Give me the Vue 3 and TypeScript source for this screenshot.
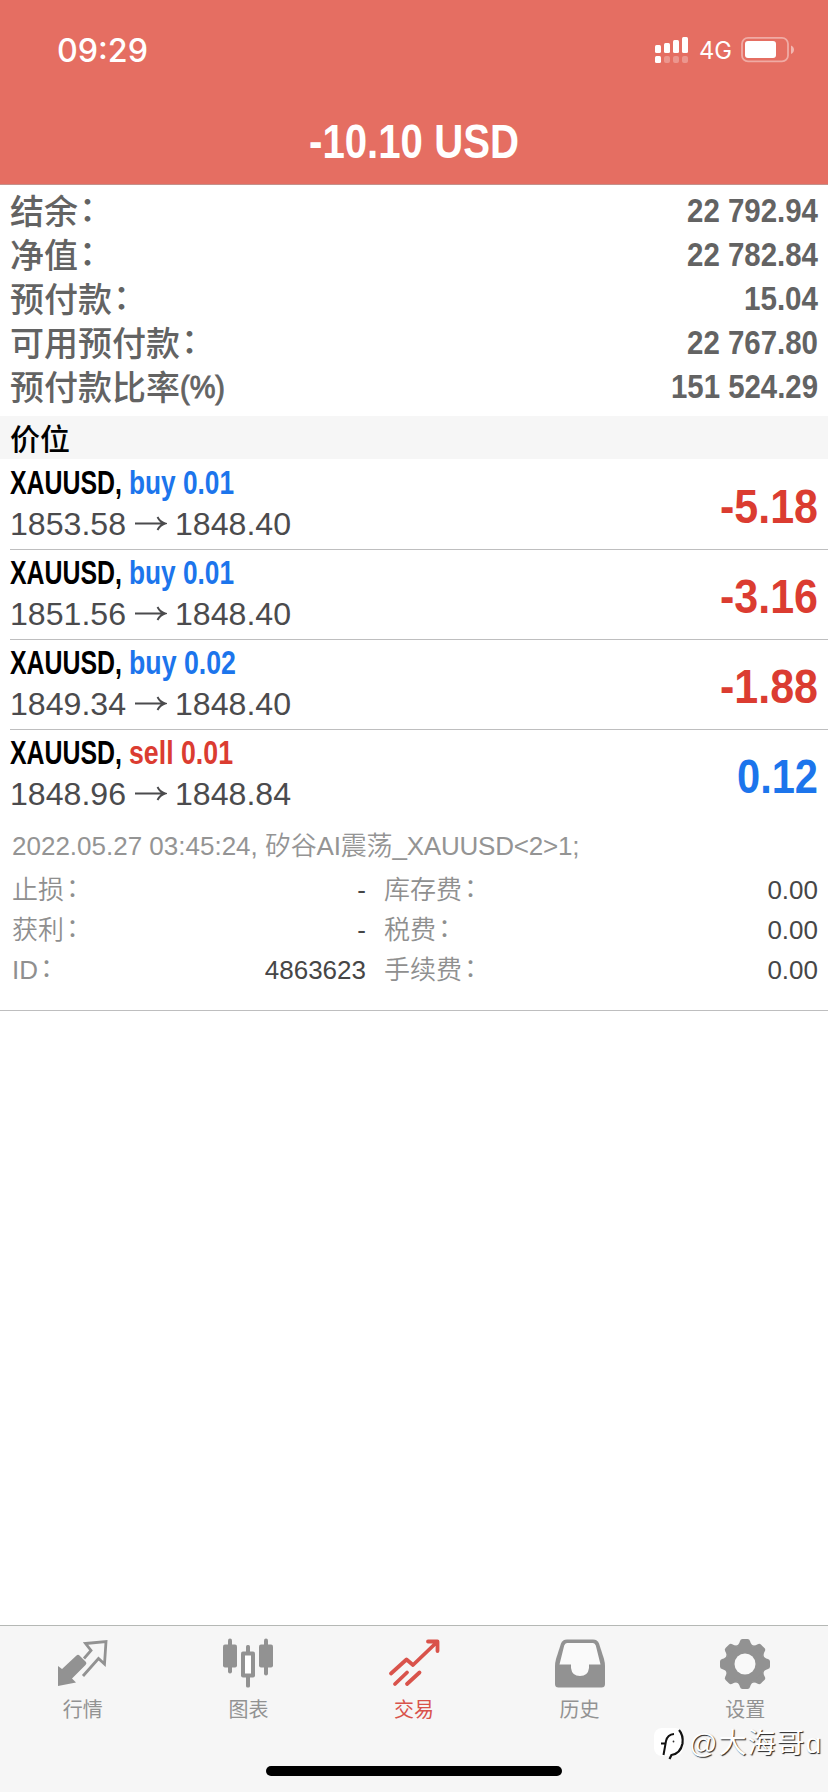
<script setup lang="ts">
import { h, type FunctionalComponent } from 'vue'

interface FitProps {
  text: string
  size: number
  width: number
  height: number
  base: number
}

// Single line of text condensed or stretched to an exact width.
const FitText: FunctionalComponent<FitProps> = (p) =>
  h('svg', { width: p.width, height: p.height, style: { display: 'block', overflow: 'visible' } }, [
    h('text', {
      x: 0, y: p.base, 'font-size': p.size, fill: 'currentColor',
      textLength: p.width, lengthAdjust: 'spacingAndGlyphs', 'xml:space': 'preserve',
    }, p.text),
  ])
FitText.props = ['text', 'size', 'width', 'height', 'base']

const summary = [
  { label: '结余', colon: true, value: '22 792.94', w: 131 },
  { label: '净值', colon: true, value: '22 782.84', w: 131 },
  { label: '预付款', colon: true, value: '15.04', w: 74 },
  { label: '可用预付款', colon: true, value: '22 767.80', w: 131 },
  { label: '预付款比率', colon: false, value: '151 524.29', w: 147 },
]

const positions = [
  { side: 'buy', lots: 'buy 0.01', lw: 105, from: '1853.58', to: '1848.40', profit: '-5.18', pw: 98 },
  { side: 'buy', lots: 'buy 0.01', lw: 105, from: '1851.56', to: '1848.40', profit: '-3.16', pw: 98 },
  { side: 'buy', lots: 'buy 0.02', lw: 107, from: '1849.34', to: '1848.40', profit: '-1.88', pw: 98 },
  { side: 'sell', lots: 'sell 0.01', lw: 104, from: '1848.96', to: '1848.84', profit: '0.12', pw: 81 },
]

const details = [
  ['止损', '-', '库存费', '0.00'],
  ['获利', '-', '税费', '0.00'],
  ['ID', '4863623', '手续费', '0.00'],
]

const teeth = [0, 45, 90, 135, 180, 225, 270, 315]
</script>

<template>
  <div class="screen">
    <header class="top">
      <div class="status">
        <FitText class="time" text="09:29" :size="32" :width="91" :height="40" :base="32" />
        <div class="status-right">
          <svg width="34" height="28" viewBox="0 0 34 28" fill="#fff">
            <rect x="0" y="9" width="6" height="8" rx="1.5" />
            <rect x="9" y="7" width="6" height="10" rx="1.5" />
            <rect x="18" y="4" width="6" height="13" rx="1.5" />
            <rect x="27" y="1" width="6" height="16" rx="1.5" />
            <rect x="0" y="20" width="6" height="7" rx="1.5" />
            <g opacity=".28">
              <rect x="9" y="20" width="6" height="7" rx="2" />
              <rect x="18" y="20" width="6" height="7" rx="2" />
              <rect x="27" y="20" width="6" height="7" rx="2" />
            </g>
          </svg>
          <FitText class="net" text="4G" :size="24" :width="33" :height="28" :base="23" />
          <svg class="battery" width="54" height="28" viewBox="0 0 54 28">
            <rect x="1" y="1.8" width="46" height="23.6" rx="6" fill="none" stroke="#fff" stroke-opacity=".42" stroke-width="1.8" />
            <rect x="4" y="5" width="31" height="17" rx="3" fill="#fff" />
            <path d="M50 9.5c4 1.800 4 6.700 0 8.500z" fill="#fff" fill-opacity=".5" />
          </svg>
        </div>
      </div>
      <FitText class="total narrow" text="-10.10 USD" :size="49" :width="210" :height="60" :base="48" />
    </header>

    <section class="summary">
      <div v-for="s in summary" :key="s.label" class="sum-row">
        <div class="sum-label">
          <span>{{ s.label }}<span v-if="s.colon" class="colon">：</span></span>
          <FitText v-if="!s.colon" class="suffix" text="(%)" :size="31" :width="45" :height="44" :base="33" />
        </div>
        <FitText class="narrow" :text="s.value" :size="34" :width="s.w" :height="44" :base="33" />
      </div>
    </section>

    <div class="band">价位</div>

    <section>
      <div v-for="(p, i) in positions" :key="i" class="pos" :class="{ last: i === 3 }">
        <div>
          <div class="pos-head narrow">
            <FitText text="XAUUSD," :size="32.500" :width="112" :height="40" :base="31" />
            <FitText :class="p.side" :text="p.lots" :size="32.500" :width="p.lw" :height="40" :base="31" />
          </div>
          <div class="prices">
            <FitText :text="p.from" :size="32" :width="116" :height="40" :base="31" />
            <svg class="arrow" width="32" height="40" viewBox="0 0 32 40" fill="none" stroke="#4b4b4d" stroke-width="1.900">
              <path d="M0 19.500H29M22.500 13Q25 18 30 19.500Q25 21 22.500 26" />
            </svg>
            <FitText :text="p.to" :size="32" :width="116" :height="40" :base="31" />
          </div>
        </div>
        <FitText class="narrow" :class="p.profit.startsWith('-') ? 'loss' : 'gain'" :text="p.profit" :size="48" :width="p.pw" :height="60" :base="47" />
      </div>
    </section>

    <section class="details">
      <div class="comment">2022.05.27 03:45:24, <span class="tight">矽谷AI震荡_XAUUSD&lt;2&gt;1;</span></div>
      <div v-for="d in details" :key="d[0]" class="det-row">
        <span class="det-label">{{ d[0] }}<span class="colon">：</span></span><span class="det-mid">{{ d[1] }}</span>
        <span class="det-label second">{{ d[2] }}<span class="colon">：</span></span><span>{{ d[3] }}</span>
      </div>
    </section>

    <nav class="tabs">
      <div class="tab">
        <svg width="52" height="52" viewBox="0 0 52 52">
          <path d="M1 28L5 31L19.500 17.500Q21 16 22.500 17.500L29 24Q30 25.500 28.500 27L15 40.500L19 44.500L1 48Z" fill="#929292" />
          <path d="M27 20.500L34 12.500L28.500 5.500L49 3.500L47.500 26L41.500 20.500L26 38" fill="none" stroke="#929292" stroke-width="2.800" />
        </svg>
        <span>行情</span>
      </div>
      <div class="tab">
        <svg width="52" height="52" viewBox="0 0 52 52" fill="#929292">
          <rect x="6" y="0.500" width="4" height="35" rx="2" /><rect x="1" y="6.500" width="14" height="23" rx="2" />
          <rect x="42" y="0.500" width="4" height="37" rx="2" /><rect x="37" y="6.500" width="14" height="23" rx="2" />
          <rect x="24" y="7" width="4" height="42.500" rx="1.500" /><rect x="19" y="13.500" width="14" height="26" rx="2" />
          <rect x="23" y="17.500" width="6" height="18" fill="#fff" />
        </svg>
        <span>图表</span>
      </div>
      <div class="tab active">
        <svg width="52" height="52" viewBox="0 0 52 52" fill="none" stroke="#d9534b" stroke-width="3.800" stroke-linecap="round" stroke-linejoin="round">
          <path d="M3 35.500L18.500 21.500L25 27L48.500 4.500M40 3.500H49.500V13M7 46L19 34.500M19 46L31.500 34.500" />
        </svg>
        <span>交易</span>
      </div>
      <div class="tab">
        <svg width="52" height="52" viewBox="0 0 52 52">
          <path d="M13 1.500H39Q43.500 1.500 45 5.500L50 21Q51 25 51 28V46Q51 49.500 47.500 49.500H4.500Q1 49.500 1 46V28Q1 25 2 21L7 5.500Q8.500 1.500 13 1.500Z" fill="#929292" />
          <path d="M13 5H39Q41 5 41.800 7.500L46.500 26.500H35V30Q34 38 26 38Q18 38 17 30V26.500H5.500L10.200 7.500Q11 5 13 5Z" fill="#fafafa" />
        </svg>
        <span>历史</span>
      </div>
      <div class="tab">
        <svg width="52" height="52" viewBox="-26 -26 52 52" fill="#929292">
          <circle r="19.500" />
          <path v-for="t in teeth" :key="t" :transform="`rotate(${t})`" d="M-9 -18Q-6 -19 -5 -23Q-4.500 -25 -2.500 -25H2.500Q4.500 -25 5 -23Q6 -19 9 -18Z" />
          <circle r="10.500" fill="#f9f9f9" />
        </svg>
        <span>设置</span>
      </div>
      <div class="watermark">
        <svg width="34" height="34" viewBox="0 0 34 34">
          <rect x="1" y="1" width="29" height="28" rx="8" fill="#fff" />
          <path d="M8 16.500H13M10.500 28L13 14Q14.500 7.500 21 7" fill="none" stroke="#111" stroke-width="2" />
          <path d="M26 3Q30.500 8 29.500 16.500Q27.500 26.500 18.500 28L16.500 32" fill="none" stroke="#111" stroke-width="2.200" />
          <circle cx="20.500" cy="14.500" r=".9" fill="#333" />
        </svg>
        <span>@大海哥ɑ</span>
      </div>
      <div class="home"></div>
    </nav>
  </div>
</template>

<style>
body { margin: 0; background: #fff; }
</style>

<style scoped>
.screen {
  width: 828px; height: 1792px; display: flex; flex-direction: column; overflow: hidden;
  background: #fff; font-family: "Liberation Sans", "Noto Sans CJK SC", sans-serif;
}
.top {
  height: 185px; box-sizing: border-box; border-bottom: 1px solid #c5918b; background: #e56e62; color: #fff;
  display: flex; flex-direction: column; align-items: center; flex: none;
}
.status { width: 100%; box-sizing: border-box; height: 110px; padding: 30px 33px 0 57px; display: flex; justify-content: space-between; }
.time { font-family: Inter, sans-serif; font-weight: 500; }
.status-right { display: flex; padding-top: 6px; }
.net { margin-left: 10px; font-family: Inter, sans-serif; font-weight: 400; }
.battery { margin-left: 9px; }
.narrow { font-family: "Liberation Sans Narrow", "Liberation Sans", sans-serif; font-weight: 700; }
.summary { height: 231px; box-sizing: border-box; padding: 4px 10px 0; color: #636363; flex: none; }
.sum-row { height: 44px; display: flex; justify-content: space-between; }
.sum-label { display: flex; height: 44px; font: 500 34px/42px "Noto Sans CJK SC", sans-serif; }
.colon { position: relative; top: -3px; left: 1px; }
.suffix { font-family: "Liberation Sans", sans-serif; stroke: #636363; stroke-width: .9px; }
.band { height: 44px; box-sizing: border-box; border-bottom: 1px solid #fff; flex: none; padding-left: 10px; background: #f6f6f6; color: #000; font: 500 30px/42px "Noto Sans CJK SC", sans-serif; }
.pos { height: 90px; box-sizing: border-box; margin-left: 10px; padding: 3px 10px 0 0; border-bottom: 1px solid #bebebf; display: flex; justify-content: space-between; }
.pos > svg { margin-top: 13px; }
.pos.last { border-bottom-color: transparent; }
.pos-head { display: flex; gap: 7px; color: #000; }
.prices { display: flex; padding-top: 1px; color: #4b4b4d; }
.arrow { margin: 0 8px 0 9px; }
.buy, .gain { color: #1c75ec; }
.sell, .loss { color: #db3c31; }
.details { height: 191px; box-sizing: border-box; flex: none; padding: 6px 10px 0 12px; border-bottom: 1px solid #bebebf; font-size: 26px; line-height: 40px; color: #464646; }
.comment { height: 44px; line-height: 40px; color: #949494; font-weight: 350; }
.tight { letter-spacing: -.2px; }
.det-row { height: 40px; display: grid; grid-template-columns: 177px 177px 1fr auto; }
.det-label { color: #8f8f8f; font-weight: 350; }
.det-label .colon { top: -2px; left: 2px; }
.second { padding-left: 18px; }
.det-mid { text-align: right; }
.tabs { position: relative; margin-top: auto; height: 167px; box-sizing: border-box; border-top: 1px solid #b5b8b5; padding-top: 12px; background: #f6f6f6; display: flex; flex: none; }
.tab { flex: 1; display: flex; flex-direction: column; align-items: center; gap: 4px; color: #929292; font: 20px/30px "Noto Sans CJK SC", sans-serif; }
.active { color: #d9534b; }
.watermark { position: absolute; left: 653px; top: 101px; display: flex; gap: 2px; color: #fff; font: 28px/34px "Liberation Sans", "Noto Sans CJK SC", sans-serif; letter-spacing: 1px; white-space: nowrap; text-shadow: 1px 1px 1px #222; }
.home { position: absolute; left: 266px; top: 140px; width: 296px; height: 10px; border-radius: 5px; background: #000; }
</style>
